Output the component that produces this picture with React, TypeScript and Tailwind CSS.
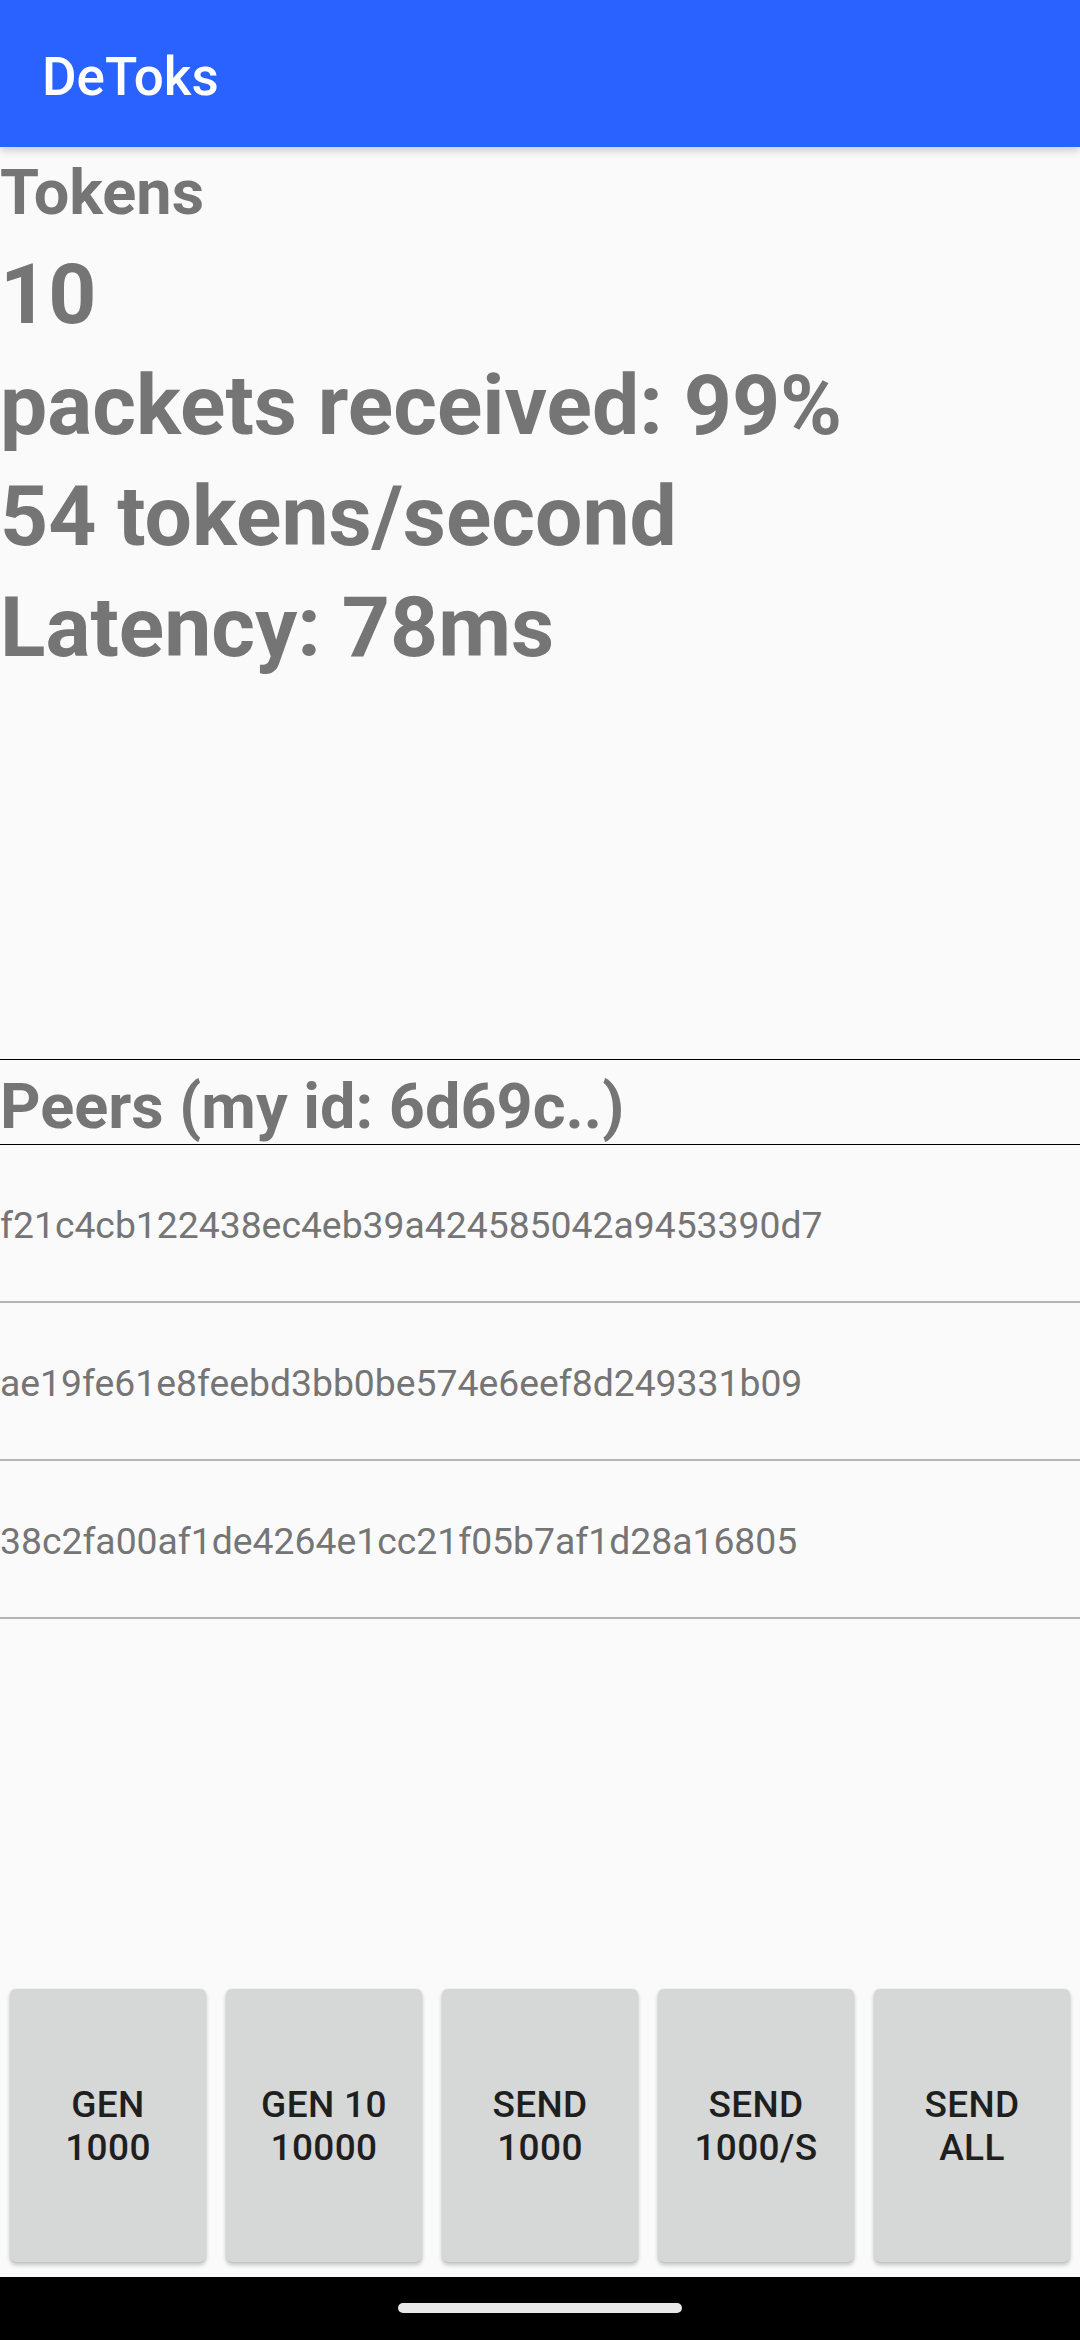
import React from "react";

const peers = [
  "f21c4cb122438ec4eb39a424585042a9453390d7",
  "ae19fe61e8feebd3bb0be574e6eef8d249331b09",
  "38c2fa00af1de4264e1cc21f05b7af1d28a16805",
];

const buttons = [
  ["GEN", "1000"],
  ["GEN 10", "10000"],
  ["SEND", "1000"],
  ["SEND", "1000/S"],
  ["SEND", "ALL"],
];

export default function App() {
  return (
    <div className="flex h-[2340px] w-[1080px] flex-col overflow-hidden bg-[#fafafa] font-[Roboto,sans-serif]">
      {/* App bar */}
      <div className="relative z-10 flex h-[147px] shrink-0 items-center bg-[#2962ff] pl-[42px] pt-[7px] shadow-[0_4px_8px_rgba(0,0,0,0.18)]">
        <span className="text-[53px] font-medium leading-[63px] text-white">DeToks</span>
      </div>

      {/* Stats */}
      <div className="flex h-[912px] shrink-0 flex-col font-bold text-[#757575]">
        <div className="text-[63px] leading-[92px]">Tokens</div>
        <div className="text-[84px] leading-[111px]">10</div>
        <div className="text-[84px] leading-[111px]">packets received: 99%</div>
        <div className="text-[84px] leading-[111px]">54 tokens/second</div>
        <div className="text-[84px] leading-[111px]">Latency: 78ms</div>
      </div>

      {/* Peers header */}
      <div className="shrink-0 border-y border-black pt-[10px] text-[63px] font-bold leading-[74px] text-[#757575]">
        Peers (my id: 6d69c..)
      </div>

      {/* Peer list */}
      <div className="flex shrink-0 flex-col">
        {peers.map((p) => (
          <div
            key={p}
            className="flex h-[158px] items-center border-b-2 border-[#b4b4b4] pt-[4px] text-[37.3px] leading-[44px] text-[#757575]"
          >
            {p}
          </div>
        ))}
      </div>

      <div className="flex-1" />

      {/* Buttons */}
      <div className="mb-[15px] flex h-[273px] shrink-0 gap-[20px] px-[10px]">
        {buttons.map(([a, b], i) => (
          <div
            key={i}
            className="flex w-[196px] flex-col items-center justify-center rounded-[6px] bg-[#d6d7d7] text-center text-[37px] font-medium leading-[43px] tracking-[0.01em] text-[#1f1f1f] shadow-[0_3px_4px_rgba(0,0,0,0.22),0_0_2px_rgba(0,0,0,0.12)]"
          >
            <span>{a}</span>
            <span>{b}</span>
          </div>
        ))}
      </div>

      {/* Nav bar */}
      <div className="flex h-[63px] shrink-0 justify-center bg-black pt-[26px]">
        <div className="h-[10px] w-[284px] rounded-full bg-[#e8e8e8]" />
      </div>
    </div>
  );
}
